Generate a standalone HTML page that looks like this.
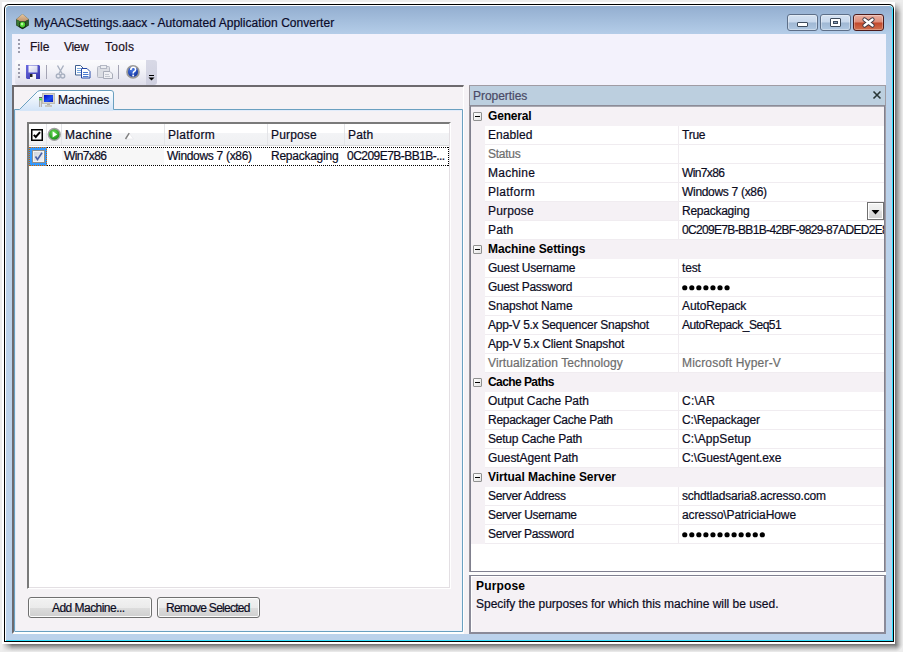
<!DOCTYPE html>
<html><head><meta charset="utf-8">
<style>
*{margin:0;padding:0;box-sizing:border-box}
html,body{width:903px;height:652px;overflow:hidden;background:#fff;position:relative}
body{font-family:"Liberation Sans",sans-serif;font-size:12px;color:#000}
.a{position:absolute}
.t{position:absolute;white-space:nowrap;line-height:14px;font-size:12px;-webkit-text-stroke:0.2px currentColor}
.b{font-weight:bold;-webkit-text-stroke:0}
.btn{border:1px solid #707070;border-radius:3px;background:linear-gradient(to bottom,#f2f2f2 0,#ebebeb 50%,#dddddd 51%,#cfcfcf 100%);box-shadow:inset 0 0 0 1px #fcfcfc}
.mb{width:9px;height:9px;border:1px solid #8f9090;border-radius:1px;background:linear-gradient(135deg,#fff,#e4e4e4)}
.mb:after{content:"";position:absolute;left:1px;top:3px;width:5px;height:1px;background:#000}
</style></head><body>

<div class="a" style="left:0;top:0;width:903px;height:652px;background:#ededed"></div>
<div class="a" style="left:895px;top:2px;width:8px;height:642px;background:linear-gradient(to right,#6e6e6e,#a4a4a4 35%,#d8d8d8 75%,#ededed);-webkit-mask-image:linear-gradient(to bottom,transparent 0,#000 11px)"></div>
<div class="a" style="left:2px;top:644px;width:893px;height:8px;background:linear-gradient(to bottom,#6e6e6e,#a4a4a4 35%,#d8d8d8 75%,#ededed);-webkit-mask-image:linear-gradient(to right,transparent 0,#000 10px)"></div>
<div class="a" style="left:895px;top:644px;width:8px;height:8px;background:radial-gradient(circle at 0 0,#6e6e6e 0,#a4a4a4 3px,#d8d8d8 6px,#ededed 8px)"></div>
<div class="a" style="left:2px;top:2px;width:893px;height:642px;background:#fff"></div>
<div class="a" style="left:4px;top:4px;width:890px;height:638px;background:#000;border-radius:5px 5px 0 0"></div>
<div class="a" style="left:5px;top:5px;width:888px;height:636px;background:#fff;border-radius:4px 4px 0 0"></div>
<div class="a" style="left:6px;top:6px;width:887px;height:635px;background:#2ee0ff;border-radius:4px 4px 0 0"></div>
<div class="a" style="left:6px;top:6px;width:886px;height:634px;background:linear-gradient(to bottom,#93aed0 0px,#b4cde8 28px,#b9d1ea 60px,#bcd2eb 100%);border-radius:4px 4px 0 0"></div>
<svg class="a" style="left:15px;top:13px" width="15" height="17" viewBox="0 0 15 17">
  <defs><linearGradient id="tan" x1="0" y1="0" x2="0" y2="1"><stop offset="0" stop-color="#e8c8a0"/><stop offset="1" stop-color="#b88a64"/></linearGradient></defs>
  <path d="M7.5 1 L13.8 6.2 L13.8 12.5 L7.5 16.2 L1.2 12.5 L1.2 6.2 Z" fill="#1e3c1c"/>
  <path d="M7.5 1 L13.8 6.2 L7.5 9.5 L1.2 6.2 Z" fill="url(#tan)"/>
  <path d="M1.8 6.8 L7 9.8 L7 15 L1.8 12.2Z" fill="#3a7a32"/>
  <path d="M13.2 6.8 L8 9.8 L8 15 L13.2 12.2Z" fill="#2c5e28"/>
  <circle cx="7.5" cy="11.8" r="3.6" fill="#102010"/>
  <circle cx="7.5" cy="11.6" r="2.8" fill="#4cd030"/>
  <circle cx="7.1" cy="11.1" r="1.3" fill="#b8f8a0"/>
</svg>

<div class="t" style="left:34px;top:16px;color:#0b0b2a;letter-spacing:0.039px;">MyAACSettings.aacx - Automated Application Converter</div>
<div class="a" style="left:787px;top:14px;width:31px;height:17px;border:1px solid #5d6f88;border-radius:3px;background:linear-gradient(to bottom,#d6e3f2 0,#c8d8ec 48%,#9fb7d3 52%,#b0c8e2 100%);box-shadow:inset 0 0 0 1px rgba(255,255,255,0.35)"></div>
<div class="a" style="left:797px;top:22px;width:11px;height:5px;background:#fff;border:1px solid #3d4b5c;border-radius:1px"></div>
<div class="a" style="left:820px;top:14px;width:31px;height:17px;border:1px solid #5d6f88;border-radius:3px;background:linear-gradient(to bottom,#d6e3f2 0,#c8d8ec 48%,#9fb7d3 52%,#b0c8e2 100%);box-shadow:inset 0 0 0 1px rgba(255,255,255,0.35)"></div>
<div class="a" style="left:830px;top:18px;width:11px;height:9px;background:#fff;border:1px solid #3d4b5c;border-radius:1px"></div>
<div class="a" style="left:833px;top:21px;width:5px;height:3px;background:#8aa0bc;border:1px solid #3d4b5c"></div>
<div class="a" style="left:853px;top:14px;width:31px;height:17px;border:1px solid #4c1b1b;border-radius:3px;background:linear-gradient(to bottom,#eab0a2 0,#de8c78 48%,#c2472b 52%,#d0704f 100%);box-shadow:inset 0 0 0 1px rgba(255,255,255,0.3)"></div>
<svg class="a" style="left:860px;top:16px" width="17" height="13" viewBox="0 0 17 13">
  <path d="M4.5 3.5 L12.5 9.5 M12.5 3.5 L4.5 9.5" stroke="#3a3440" stroke-width="4.2" stroke-linecap="round"/>
  <path d="M4.5 3.5 L12.5 9.5 M12.5 3.5 L4.5 9.5" stroke="#fff" stroke-width="2.4" stroke-linecap="round"/>
</svg>
<div class="a" style="left:12px;top:34px;width:874px;height:600px;background:#f5f2f5"></div>
<div class="a" style="left:12px;top:34px;width:874px;height:51px;background:#f3f2fc"></div>
<div class="a" style="left:18px;top:39px;width:2px;height:14px;background:repeating-linear-gradient(to bottom,#9c9cac 0 2px,transparent 2px 4px)"></div>

<div class="t" style="left:30px;top:40px;color:#1a1020;">File</div>
<div class="t" style="left:64px;top:40px;color:#1a1020;letter-spacing:-0.333px;">View</div>
<div class="t" style="left:105px;top:40px;color:#1a1020;letter-spacing:0.25px;">Tools</div>
<div class="a" style="left:15px;top:60px;width:131px;height:25px;border-radius:3px 0 0 3px;background:linear-gradient(to bottom,#fbfbfd 0,#f3f3f8 40%,#dedeeb 100%)"></div>
<div class="a" style="left:146px;top:60px;width:11px;height:25px;border-radius:0 3px 3px 0;background:linear-gradient(to bottom,#d8d9e6,#cfd0e0)"></div>
<div class="a" style="left:18px;top:64px;width:2px;height:14px;background:repeating-linear-gradient(to bottom,#9c9cac 0 2px,transparent 2px 4px)"></div>
<svg class="a" style="left:0;top:0" width="160" height="90">
  <defs>
    <linearGradient id="flp" x1="0" y1="0" x2="1" y2="1"><stop offset="0" stop-color="#6a6ae0"/><stop offset="1" stop-color="#3434a8"/></linearGradient>
    <linearGradient id="flw" x1="0" y1="0" x2="1" y2="1"><stop offset="0" stop-color="#ffffff"/><stop offset="1" stop-color="#c8cce8"/></linearGradient>
    <radialGradient id="hlp" cx="0.4" cy="0.3" r="0.8"><stop offset="0" stop-color="#4c7ce8"/><stop offset="1" stop-color="#0c2c98"/></radialGradient>
  </defs>
  <path d="M26 65 H39 L40 66 V79 H27 L26 78Z" fill="url(#flp)"/>
  <rect x="28.5" y="65.5" width="9" height="7" fill="url(#flw)"/>
  <rect x="30" y="74" width="6" height="5" fill="#f4f4f4"/>
  <rect x="30" y="74" width="2.5" height="3" fill="#202020"/>
  <rect x="46" y="65" width="1" height="14" fill="#a4a4b4"/>
  <g fill="none" stroke="#a8b0c0" stroke-width="1.4">
    <path d="M57.5 65.5 L62 73.5 M63.5 65.5 L59 73.5"/>
    <circle cx="58.3" cy="76" r="2"/>
    <circle cx="62.7" cy="76" r="2"/>
  </g>
  <path d="M75.5 65.5 H80.5 L83 68 V75 H75.5Z" fill="#fff" stroke="#406090"/>
  <rect x="77" y="68" width="4" height="1" fill="#78a8e0"/>
  <rect x="77" y="70" width="5" height="1" fill="#78a8e0"/>
  <rect x="77" y="72" width="5" height="1" fill="#78a8e0"/>
  <path d="M81.5 68.5 H87 L90 71.5 V78 H81.5Z" fill="#fff" stroke="#2448a8"/>
  <rect x="83" y="72" width="5" height="1" fill="#4878d0"/>
  <rect x="83" y="74" width="5.5" height="1" fill="#4878d0"/>
  <rect x="83" y="76" width="5.5" height="1" fill="#4878d0"/>
  <rect x="97.5" y="66.5" width="12" height="11" rx="1" fill="#dcdee4" stroke="#b4b8c4"/>
  <rect x="100.5" y="65.5" width="6" height="3" fill="#eceef2" stroke="#b4b8c4"/>
  <path d="M103.5 71.5 H110 L112.5 74 V78.5 H103.5Z" fill="#f0f0f4" stroke="#a8acb8"/>
  <rect x="105" y="74" width="4" height="1" fill="#c4c8d0"/>
  <rect x="105" y="76" width="5" height="1" fill="#c4c8d0"/>
  <rect x="118" y="65" width="1" height="14" fill="#a4a4b4"/>
  <circle cx="133" cy="71.9" r="6.8" fill="#989898"/>
  <circle cx="133" cy="71.9" r="5.0" fill="url(#hlp)"/>
  <path d="M130.8 70 Q130.8 67.2 133.2 67.2 Q135.6 67.2 135.6 69.4 Q135.6 70.8 133.8 71.8 Q133.2 72.2 133.2 73.6" fill="none" stroke="#fff" stroke-width="1.6"/>
  <rect x="132.3" y="74.6" width="1.8" height="1.8" fill="#fff"/>
  <rect x="149" y="75" width="5" height="1" fill="#000"/>
  <path d="M148.5 77.5 L154.5 77.5 L151.5 80.5Z" fill="#000"/>
</svg>
<div class="a" style="left:12px;top:85px;width:452px;height:549px;border-top:2px solid #6d6a6e;border-left:2px solid #6d6a6e;border-right:1px solid #fff;border-bottom:2px solid #fff"></div>

<svg class="a" style="left:0;top:0" width="470" height="652">
  <defs><linearGradient id="tabg" x1="0" y1="0" x2="0" y2="1"><stop offset="0" stop-color="#ffffff"/><stop offset="1" stop-color="#d3e4f8"/></linearGradient></defs>
  <path d="M19 110 L37.5 91.5 Q39 90.5 41 90.5 L111 90.5 Q113.5 90.5 113.5 93 L113.5 110 Z" fill="url(#tabg)"/>
  <path d="M14.5 631 L14.5 109.5 L19.5 109.5 L37.5 91.5 Q39 90.5 41 90.5 L111 90.5 Q113.5 90.5 113.5 93 L113.5 109.5 L462.5 109.5 L462.5 631.5 L14.5 631.5" fill="none" stroke="#6aa0c0" stroke-width="1"/>
</svg>
<div class="a" style="left:15px;top:110px;width:447px;height:521px;border-left:1px solid #e2ecfa;border-top:1px solid #e2ecfa;border-right:1px solid #eef2fb;border-bottom:1px solid #eef2fb"></div>
<div class="a" style="left:20px;top:110px;width:93px;height:1px;background:#d6e6f8"></div>
<svg class="a" style="left:38px;top:92px" width="18" height="16" viewBox="0 0 18 16">
  <defs>
    <linearGradient id="twr" x1="0" y1="0" x2="1" y2="0"><stop offset="0" stop-color="#9a9a98"/><stop offset="0.5" stop-color="#dcdcd8"/><stop offset="1" stop-color="#a0a09c"/></linearGradient>
    <linearGradient id="scr" x1="0" y1="0" x2="1" y2="1"><stop offset="0" stop-color="#0008c8"/><stop offset="0.6" stop-color="#2050f0"/><stop offset="1" stop-color="#0818c0"/></linearGradient>
  </defs>
  <rect x="1" y="5" width="3" height="10" fill="url(#twr)"/>
  <rect x="1" y="5" width="3" height="1" fill="#606060"/>
  <rect x="1.3" y="6.5" width="2.4" height="1.8" fill="#30e030"/>
  <rect x="4" y="1" width="13" height="11" rx="0.8" fill="#d6d4ca"/>
  <rect x="4.5" y="1.5" width="12" height="10" fill="none" stroke="#c0beb4" stroke-width="1"/>
  <rect x="6" y="3" width="9" height="7" fill="url(#scr)"/>
  <rect x="9" y="12" width="3" height="1" fill="#b0b0a8"/>
  <rect x="7" y="13" width="7" height="2" fill="#c8c8c0"/>
</svg>

<div class="t" style="left:58px;top:93px;color:#0b0b1e;">Machines</div>
<div class="a" style="left:27px;top:122px;width:424px;height:467px;background:#fff;border-top:2px solid #7a7a7a;border-left:2px solid #7a7a7a;border-right:2px solid #fff;border-bottom:2px solid #fff"></div>
<div class="a" style="left:29px;top:587px;width:421px;height:1px;background:#e3dfe3"></div>
<div class="a" style="left:449px;top:124px;width:1px;height:464px;background:#e3dfe3"></div>
<div class="a" style="left:27px;top:122px;width:2px;height:466px;background:#7a7a7a"></div>
<div class="a" style="left:29px;top:124px;width:420px;height:21px;background:linear-gradient(to bottom,#fff 0,#fff 9px,#f3f4f6 9px,#eff0f2 100%)"></div>
<div class="a" style="left:29px;top:145px;width:420px;height:1px;background:#d8d8da"></div>
<div class="a" style="left:46px;top:124px;width:1px;height:21px;background:#e4e5e8"></div>
<div class="a" style="left:61px;top:124px;width:1px;height:21px;background:#e4e5e8"></div>
<div class="a" style="left:164px;top:124px;width:1px;height:21px;background:#e4e5e8"></div>
<div class="a" style="left:267px;top:124px;width:1px;height:21px;background:#e4e5e8"></div>
<div class="a" style="left:344px;top:124px;width:1px;height:21px;background:#e4e5e8"></div>
<svg class="a" style="left:31px;top:129px" width="12" height="12" viewBox="0 0 12 12">
  <rect x="0.75" y="0.75" width="10.5" height="10.5" fill="#fff" stroke="#000" stroke-width="1.5"/>
  <path d="M2.8 5.8 L4.8 8 L9 3.2" fill="none" stroke="#000" stroke-width="2"/>
</svg>
<svg class="a" style="left:47px;top:127px" width="15" height="15" viewBox="0 0 15 15">
  <defs><radialGradient id="gg" cx="0.45" cy="0.35" r="0.7"><stop offset="0" stop-color="#6ee05a"/><stop offset="1" stop-color="#108a10"/></radialGradient></defs>
  <circle cx="7.3" cy="7.4" r="6.6" fill="#a0a0a0"/>
  <circle cx="7.3" cy="7.4" r="5.2" fill="url(#gg)"/>
  <path d="M5.6 4.3 L10.2 7.4 L5.6 10.5Z" fill="#fff"/>
</svg>
<svg class="a" style="left:123px;top:132px" width="12" height="8" viewBox="0 0 12 8">
  <path d="M6 1 L10.5 7 L3 7Z" fill="#fff" stroke="#e8e8ec" stroke-width="0.8"/>
  <path d="M2.5 7 L6.2 1.2" stroke="#808080" stroke-width="1.4"/>
</svg>

<div class="t" style="left:65px;top:128px;color:#0b0b1e;letter-spacing:0.25px;">Machine</div>
<div class="t" style="left:168px;top:128px;color:#0b0b1e;letter-spacing:0.286px;">Platform</div>
<div class="t" style="left:271px;top:128px;color:#0b0b1e;letter-spacing:0.167px;">Purpose</div>
<div class="t" style="left:348px;top:128px;color:#0b0b1e;letter-spacing:0.133px;">Path</div>
<div class="a" style="left:62px;top:148px;width:102px;height:17px;background:#f7f7f7"></div>
<div class="a" style="left:29px;top:147px;width:18px;height:19px;background:#3399ff"></div>
<div class="a" style="left:29px;top:147px;width:18px;height:19px;border:1px dotted #cc6600"></div>
<div class="a" style="left:47px;top:147px;width:402px;height:1px;background:repeating-linear-gradient(to right,#000 0 1px,transparent 1px 2px)"></div>
<div class="a" style="left:47px;top:165px;width:402px;height:1px;background:repeating-linear-gradient(to right,#000 0 1px,transparent 1px 2px)"></div>
<div class="a" style="left:448px;top:147px;width:1px;height:19px;background:repeating-linear-gradient(to bottom,#000 0 1px,transparent 1px 2px)"></div>
<svg class="a" style="left:32px;top:150px" width="13" height="13" viewBox="0 0 13 13">
  <defs><linearGradient id="cbg" x1="0" y1="0" x2="1" y2="1"><stop offset="0" stop-color="#cfd4dc"/><stop offset="1" stop-color="#f2f2f4"/></linearGradient></defs>
  <rect x="0.5" y="0.5" width="12" height="12" fill="#f4f4f4" stroke="#8e8f8f"/>
  <rect x="2" y="2" width="9" height="9" fill="url(#cbg)"/>
  <path d="M3.5 6.5 L5.5 9.5 L10 2.8" fill="none" stroke="#4a62a8" stroke-width="1.6"/>
</svg>

<div class="t" style="left:64px;top:149px;color:#0b0b1e;letter-spacing:-0.617px;">Win7x86</div>
<div class="t" style="left:167px;top:149px;color:#0b0b1e;letter-spacing:-0.307px;">Windows 7 (x86)</div>
<div class="t" style="left:271px;top:149px;color:#0b0b1e;letter-spacing:-0.25px;">Repackaging</div>
<div class="t" style="left:347px;top:149px;color:#0b0b1e;letter-spacing:-0.537px;">0C209E7B-BB1B-...</div>
<div class="a btn" style="left:28px;top:597px;width:124px;height:21px"></div>
<div class="t" style="left:52px;top:601px;color:#0b0b1e;letter-spacing:-0.538px;">Add Machine...</div>
<div class="a btn" style="left:157px;top:597px;width:103px;height:21px"></div>
<div class="t" style="left:166px;top:601px;color:#0b0b1e;letter-spacing:-0.736px;">Remove Selected</div>
<div class="a" style="left:469px;top:85px;width:417px;height:549px;background:#fcfcfc"></div>
<div class="a" style="left:469px;top:85px;width:417px;height:21px;background:#bccfdf;border-top:1px solid #a09ca4;border-left:1px solid #9a969c;border-right:1px solid #a09ca4;border-bottom:1px solid #8c8c98"></div>

<div class="t" style="left:473px;top:89px;color:#4a4a66;letter-spacing:-0.044px;">Properties</div>
<svg class="a" style="left:872px;top:90px" width="10" height="10" viewBox="0 0 10 10"><path d="M1.5 1.5 L8.5 8.5 M8.5 1.5 L1.5 8.5" stroke="#283636" stroke-width="1.6"/></svg>
<div class="a" style="left:469px;top:106px;width:417px;height:466px;background:#fff;border-left:1px solid #9a969c;border-right:1px solid #a09ca4;border-top:1px solid #a8a8b0"></div>
<div class="a" style="left:470px;top:106px;width:415px;height:466px;border-left:1px solid #80808e;border-right:1px solid #80808e;border-bottom:1px solid #808090"></div>
<div class="a" style="left:471px;top:107px;width:14px;height:437px;background:#f5f1f5"></div>

<div class="a" style="left:471px;top:107px;width:413px;height:19px;background:#f5f1f5"></div>
<div class="a mb" style="left:473px;top:112px"></div>
<div class="t b" style="left:488px;top:109px;color:#000;letter-spacing:-0.167px;">General</div>
<div class="a" style="left:485px;top:144px;width:399px;height:1px;background:#f0ecf0"></div>
<div class="a" style="left:678px;top:126px;width:1px;height:18px;background:#f0ecf0"></div>
<div class="t" style="left:488px;top:128px;color:#0b0b1e;letter-spacing:0.067px;">Enabled</div>
<div class="a" style="left:679px;top:126px;width:205px;height:18px;overflow:hidden"><div class="t" style="left:3px;top:2px;color:#0b0b1e;letter-spacing:-0.233px;">True</div></div>
<div class="a" style="left:485px;top:163px;width:399px;height:1px;background:#f0ecf0"></div>
<div class="a" style="left:678px;top:145px;width:1px;height:18px;background:#f0ecf0"></div>
<div class="t" style="left:488px;top:147px;color:#6d6d6d;letter-spacing:-0.26px;">Status</div>
<div class="a" style="left:485px;top:182px;width:399px;height:1px;background:#f0ecf0"></div>
<div class="a" style="left:678px;top:164px;width:1px;height:18px;background:#f0ecf0"></div>
<div class="t" style="left:488px;top:166px;color:#0b0b1e;letter-spacing:0.25px;">Machine</div>
<div class="a" style="left:679px;top:164px;width:205px;height:18px;overflow:hidden"><div class="t" style="left:3px;top:2px;color:#0b0b1e;letter-spacing:-0.617px;">Win7x86</div></div>
<div class="a" style="left:485px;top:201px;width:399px;height:1px;background:#f0ecf0"></div>
<div class="a" style="left:678px;top:183px;width:1px;height:18px;background:#f0ecf0"></div>
<div class="t" style="left:488px;top:185px;color:#0b0b1e;letter-spacing:0.286px;">Platform</div>
<div class="a" style="left:679px;top:183px;width:205px;height:18px;overflow:hidden"><div class="t" style="left:3px;top:2px;color:#0b0b1e;letter-spacing:-0.307px;">Windows 7 (x86)</div></div>
<div class="a" style="left:485px;top:202px;width:193px;height:18px;background:#f5f1f5"></div>
<div class="a" style="left:485px;top:220px;width:399px;height:1px;background:#f0ecf0"></div>
<div class="a" style="left:678px;top:202px;width:1px;height:18px;background:#f0ecf0"></div>
<div class="t" style="left:488px;top:204px;color:#0b0b1e;letter-spacing:0.167px;">Purpose</div>
<div class="a" style="left:679px;top:202px;width:205px;height:18px;overflow:hidden"><div class="t" style="left:3px;top:2px;color:#0b0b1e;letter-spacing:-0.25px;">Repackaging</div></div>
<div class="a" style="left:867px;top:202px;width:17px;height:18px;border:1px solid #707070;background:#fff"></div>
<div class="a" style="left:869px;top:204px;width:13px;height:14px;background:linear-gradient(to bottom,#f3f3f3 0,#ebebeb 45%,#dcdcdc 55%,#d4d4d4 100%)"></div>
<svg class="a" style="left:871px;top:210px" width="9" height="5"><path d="M0.5 0 L8.5 0 L4.5 4.5Z" fill="#000"/></svg>
<div class="a" style="left:485px;top:239px;width:399px;height:1px;background:#f0ecf0"></div>
<div class="a" style="left:678px;top:221px;width:1px;height:18px;background:#f0ecf0"></div>
<div class="t" style="left:488px;top:223px;color:#0b0b1e;letter-spacing:0.133px;">Path</div>
<div class="a" style="left:679px;top:221px;width:205px;height:18px;overflow:hidden"><div class="t" style="left:3px;top:2px;color:#0b0b1e;letter-spacing:-0.667px;">0C209E7B-BB1B-42BF-9829-87ADED2E8</div></div>
<div class="a" style="left:471px;top:240px;width:413px;height:19px;background:#f5f1f5"></div>
<div class="a mb" style="left:473px;top:245px"></div>
<div class="t b" style="left:488px;top:242px;color:#000;letter-spacing:-0.087px;">Machine Settings</div>
<div class="a" style="left:485px;top:277px;width:399px;height:1px;background:#f0ecf0"></div>
<div class="a" style="left:678px;top:259px;width:1px;height:18px;background:#f0ecf0"></div>
<div class="t" style="left:488px;top:261px;color:#0b0b1e;letter-spacing:-0.254px;">Guest Username</div>
<div class="a" style="left:679px;top:259px;width:205px;height:18px;overflow:hidden"><div class="t" style="left:3px;top:2px;color:#0b0b1e;letter-spacing:-0.167px;">test</div></div>
<div class="a" style="left:485px;top:296px;width:399px;height:1px;background:#f0ecf0"></div>
<div class="a" style="left:678px;top:278px;width:1px;height:18px;background:#f0ecf0"></div>
<div class="t" style="left:488px;top:280px;color:#0b0b1e;letter-spacing:-0.277px;">Guest Password</div>
<svg class="a" style="left:682px;top:285px" width="52" height="6"><circle cx="2.75" cy="2.75" r="2.6"/><circle cx="9.80" cy="2.75" r="2.6"/><circle cx="16.85" cy="2.75" r="2.6"/><circle cx="23.90" cy="2.75" r="2.6"/><circle cx="30.95" cy="2.75" r="2.6"/><circle cx="38.00" cy="2.75" r="2.6"/><circle cx="45.05" cy="2.75" r="2.6"/></svg>
<div class="a" style="left:485px;top:315px;width:399px;height:1px;background:#f0ecf0"></div>
<div class="a" style="left:678px;top:297px;width:1px;height:18px;background:#f0ecf0"></div>
<div class="t" style="left:488px;top:299px;color:#0b0b1e;letter-spacing:-0.125px;">Snapshot Name</div>
<div class="a" style="left:679px;top:297px;width:205px;height:18px;overflow:hidden"><div class="t" style="left:3px;top:2px;color:#0b0b1e;letter-spacing:-0.111px;">AutoRepack</div></div>
<div class="a" style="left:485px;top:334px;width:399px;height:1px;background:#f0ecf0"></div>
<div class="a" style="left:678px;top:316px;width:1px;height:18px;background:#f0ecf0"></div>
<div class="t" style="left:488px;top:318px;color:#0b0b1e;letter-spacing:-0.259px;">App-V 5.x Sequencer Snapshot</div>
<div class="a" style="left:679px;top:316px;width:205px;height:18px;overflow:hidden"><div class="t" style="left:3px;top:2px;color:#0b0b1e;letter-spacing:-0.467px;">AutoRepack_Seq51</div></div>
<div class="a" style="left:485px;top:353px;width:399px;height:1px;background:#f0ecf0"></div>
<div class="a" style="left:678px;top:335px;width:1px;height:18px;background:#f0ecf0"></div>
<div class="t" style="left:488px;top:337px;color:#0b0b1e;letter-spacing:-0.179px;">App-V 5.x Client Snapshot</div>
<div class="a" style="left:485px;top:372px;width:399px;height:1px;background:#f0ecf0"></div>
<div class="a" style="left:678px;top:354px;width:1px;height:18px;background:#f0ecf0"></div>
<div class="t" style="left:488px;top:356px;color:#6d6d6d;letter-spacing:0.104px;">Virtualization Technology</div>
<div class="a" style="left:679px;top:354px;width:205px;height:18px;overflow:hidden"><div class="t" style="left:3px;top:2px;color:#6d6d6d;letter-spacing:0.175px;">Microsoft Hyper-V</div></div>
<div class="a" style="left:471px;top:373px;width:413px;height:19px;background:#f5f1f5"></div>
<div class="a mb" style="left:473px;top:378px"></div>
<div class="t b" style="left:488px;top:375px;color:#000;letter-spacing:-0.57px;">Cache Paths</div>
<div class="a" style="left:485px;top:410px;width:399px;height:1px;background:#f0ecf0"></div>
<div class="a" style="left:678px;top:392px;width:1px;height:18px;background:#f0ecf0"></div>
<div class="t" style="left:488px;top:394px;color:#0b0b1e;letter-spacing:-0.075px;">Output Cache Path</div>
<div class="a" style="left:679px;top:392px;width:205px;height:18px;overflow:hidden"><div class="t" style="left:3px;top:2px;color:#0b0b1e;letter-spacing:0.25px;">C:\AR</div></div>
<div class="a" style="left:485px;top:429px;width:399px;height:1px;background:#f0ecf0"></div>
<div class="a" style="left:678px;top:411px;width:1px;height:18px;background:#f0ecf0"></div>
<div class="t" style="left:488px;top:413px;color:#0b0b1e;letter-spacing:-0.285px;">Repackager Cache Path</div>
<div class="a" style="left:679px;top:411px;width:205px;height:18px;overflow:hidden"><div class="t" style="left:3px;top:2px;color:#0b0b1e;letter-spacing:-0.167px;">C:\Repackager</div></div>
<div class="a" style="left:485px;top:448px;width:399px;height:1px;background:#f0ecf0"></div>
<div class="a" style="left:678px;top:430px;width:1px;height:18px;background:#f0ecf0"></div>
<div class="t" style="left:488px;top:432px;color:#0b0b1e;letter-spacing:-0.213px;">Setup Cache Path</div>
<div class="a" style="left:679px;top:430px;width:205px;height:18px;overflow:hidden"><div class="t" style="left:3px;top:2px;color:#0b0b1e;letter-spacing:0.1px;">C:\AppSetup</div></div>
<div class="a" style="left:485px;top:467px;width:399px;height:1px;background:#f0ecf0"></div>
<div class="a" style="left:678px;top:449px;width:1px;height:18px;background:#f0ecf0"></div>
<div class="t" style="left:488px;top:451px;color:#0b0b1e;letter-spacing:-0.086px;">GuestAgent Path</div>
<div class="a" style="left:679px;top:449px;width:205px;height:18px;overflow:hidden"><div class="t" style="left:3px;top:2px;color:#0b0b1e;letter-spacing:-0.125px;">C:\GuestAgent.exe</div></div>
<div class="a" style="left:471px;top:468px;width:413px;height:19px;background:#f5f1f5"></div>
<div class="a mb" style="left:473px;top:473px"></div>
<div class="t b" style="left:488px;top:470px;color:#000;letter-spacing:-0.057px;">Virtual Machine Server</div>
<div class="a" style="left:485px;top:505px;width:399px;height:1px;background:#f0ecf0"></div>
<div class="a" style="left:678px;top:487px;width:1px;height:18px;background:#f0ecf0"></div>
<div class="t" style="left:488px;top:489px;color:#0b0b1e;letter-spacing:-0.315px;">Server Address</div>
<div class="a" style="left:679px;top:487px;width:205px;height:18px;overflow:hidden"><div class="t" style="left:3px;top:2px;color:#0b0b1e;letter-spacing:-0.188px;">schdtladsaria8.acresso.com</div></div>
<div class="a" style="left:485px;top:524px;width:399px;height:1px;background:#f0ecf0"></div>
<div class="a" style="left:678px;top:506px;width:1px;height:18px;background:#f0ecf0"></div>
<div class="t" style="left:488px;top:508px;color:#0b0b1e;letter-spacing:-0.357px;">Server Username</div>
<div class="a" style="left:679px;top:506px;width:205px;height:18px;overflow:hidden"><div class="t" style="left:3px;top:2px;color:#0b0b1e;letter-spacing:-0.105px;">acresso\PatriciaHowe</div></div>
<div class="a" style="left:485px;top:543px;width:399px;height:1px;background:#f0ecf0"></div>
<div class="a" style="left:678px;top:525px;width:1px;height:18px;background:#f0ecf0"></div>
<div class="t" style="left:488px;top:527px;color:#0b0b1e;letter-spacing:-0.371px;">Server Password</div>
<svg class="a" style="left:682px;top:532px" width="87" height="6"><circle cx="2.75" cy="2.75" r="2.6"/><circle cx="9.80" cy="2.75" r="2.6"/><circle cx="16.85" cy="2.75" r="2.6"/><circle cx="23.90" cy="2.75" r="2.6"/><circle cx="30.95" cy="2.75" r="2.6"/><circle cx="38.00" cy="2.75" r="2.6"/><circle cx="45.05" cy="2.75" r="2.6"/><circle cx="52.10" cy="2.75" r="2.6"/><circle cx="59.15" cy="2.75" r="2.6"/><circle cx="66.20" cy="2.75" r="2.6"/><circle cx="73.25" cy="2.75" r="2.6"/><circle cx="80.30" cy="2.75" r="2.6"/></svg>
<div class="a" style="left:469px;top:575px;width:417px;height:59px;background:#f5f1f5;border-left:2px solid #8a8a98;border-top:1px solid #808090;border-right:2px solid #8a8a98;border-bottom:2px solid #8a8a98;box-shadow:inset 1px 1px 0 #fff"></div>
<div class="t b" style="left:476px;top:579px;color:#000;letter-spacing:0.167px;">Purpose</div>
<div class="t" style="left:476px;top:597px;color:#0b0b1e;letter-spacing:-0.018px;">Specify the purposes for which this machine will be used.</div>
</body></html>
